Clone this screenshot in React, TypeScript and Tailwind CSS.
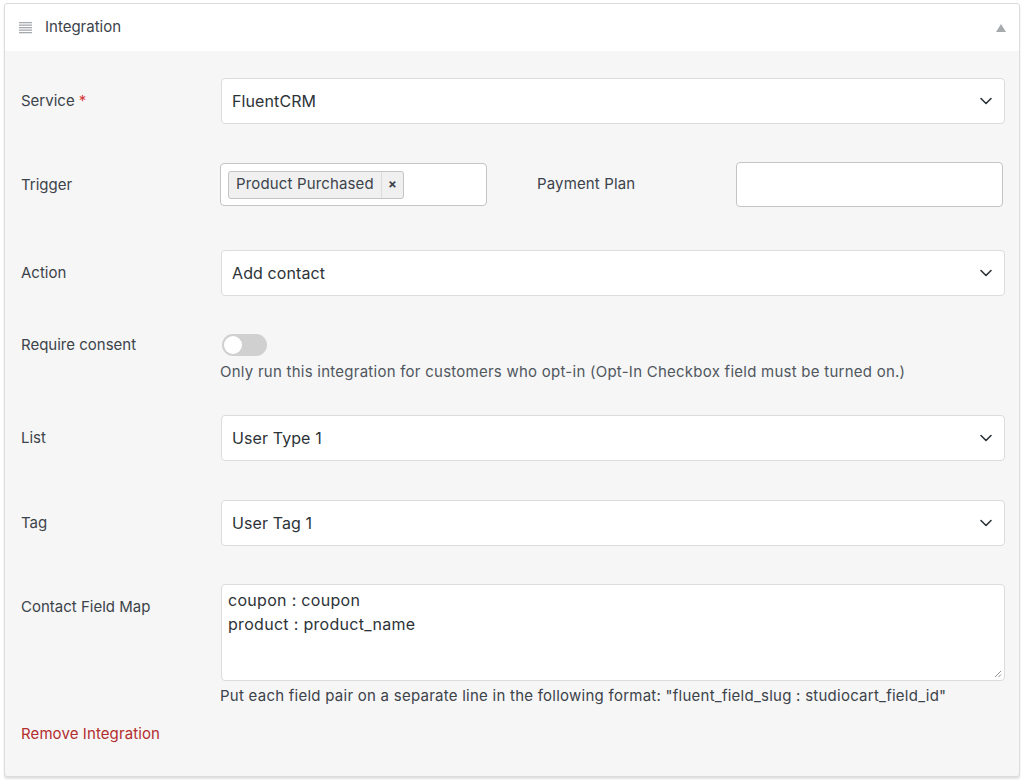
import React from "react";

const Chevron = () => (
  <svg width="14" height="14" viewBox="0 0 14 14" fill="none" className="shrink-0">
    <path d="M2 4.5 L7 9.5 L12 4.5" stroke="#2c3338" strokeWidth="1.6" strokeLinecap="round" strokeLinejoin="round" />
  </svg>
);

const Select = ({ value }: { value: string }) => (
  <div className="flex h-[46px] flex-1 items-center justify-between rounded-[4px] border border-[#dcdcde] bg-white pl-[10px] pr-[11px] text-[16px] tracking-[0.1px] text-[#2c3338]">
    <span>{value}</span>
    <Chevron />
  </div>
);

const Label = ({ children }: { children: React.ReactNode }) => (
  <div className="w-[200px] shrink-0 text-[15px] leading-[22px] text-[#3c434a]">{children}</div>
);

export default function App() {
  return (
    <div className="min-h-[780px] bg-white pt-[3px]" style={{ fontFamily: "Inter, 'Noto Sans', sans-serif" }}>
      <div className="ml-[4px] w-[1016px] rounded-[3px] border border-[#dcdcde] bg-[#f6f6f6] shadow-[0_2px_2px_rgba(0,0,0,0.12)]">
        <div className="flex h-[47px] items-center rounded-t-[3px] bg-white pl-[14px] pr-[13px]">
          <svg width="14" height="12" viewBox="0 0 14 12" className="mr-[12px]">
            {[0, 2.5, 5, 7.5, 10].map((y) => (
              <rect key={y} x="0" y={y} width="13" height="1.3" fill="#a7aaad" />
            ))}
          </svg>
          <span className="text-[15px] text-[#3c434a]">Integration</span>
          <div className="flex-1" />
          <svg width="10" height="8" viewBox="0 0 10 8">
            <path d="M5 0 L10 8 L0 8 Z" fill="#a7aaad" />
          </svg>
        </div>

        <div className="pb-[31px] pl-[16px] pr-[14px] pt-[27px]">
          {/* Service */}
          <div className="flex items-center">
            <Label>
              Service <span className="text-[#d63638]">*</span>
            </Label>
            <Select value="FluentCRM" />
          </div>

          {/* Trigger */}
          <div className="mt-[38px] flex h-[45px] items-center">
            <Label>Trigger</Label>
            <div className="-ml-px flex h-[43px] w-[267px] items-center rounded-[4px] border border-[#c3c4c7] bg-white pl-[7px]">
              <div className="flex h-[28px] items-stretch rounded-[3px] border border-[#c3c4c7] bg-[#f0f0f1] text-[15px] text-[#3c434a]">
                <span className="flex items-center border-r border-[#dcdcde] px-[7px] tracking-[0.15px]">Product Purchased</span>
                <span className="flex w-[21px] items-center justify-center text-[13px] font-bold text-[#3c434a]">×</span>
              </div>
            </div>
            <div className="w-[249px] pl-[50px] text-[15px] tracking-[0.15px] text-[#3c434a]">Payment Plan</div>
            <div className="h-[45px] w-[267px] rounded-[4px] border border-[#c3c4c7] bg-white" />
          </div>

          {/* Action */}
          <div className="mt-[43px] flex items-center">
            <Label>Action</Label>
            <Select value="Add contact" />
          </div>

          {/* Require consent */}
          <div className="mt-[38px] flex">
            <Label>Require consent</Label>
            <div className="flex flex-col">
              <div className="ml-[1px] flex h-[22px] w-[45px] items-center rounded-full bg-[#d0d0d0] px-[2px]">
                <div className="h-[18px] w-[18px] rounded-full bg-white" />
              </div>
              <div className="-ml-px mt-[5px] text-[15px] leading-[22px] tracking-[0.25px] text-[#50575e]">
                Only run this integration for customers who opt-in (Opt-In Checkbox field must be turned on.)
              </div>
            </div>
          </div>

          {/* List */}
          <div className="mt-[32px] flex items-center">
            <Label>List</Label>
            <Select value="User Type 1" />
          </div>

          {/* Tag */}
          <div className="mt-[39px] flex items-center">
            <Label>Tag</Label>
            <Select value="User Tag 1" />
          </div>

          {/* Contact Field Map */}
          <div className="mt-[38px] flex">
            <Label>
              <div className="pt-[12px]">Contact Field Map</div>
            </Label>
            <div className="flex flex-1 flex-col">
              <div className="relative h-[97px] rounded-[4px] border border-[#dcdcde] bg-white px-[6px] pt-[3px] text-[16px] leading-[24px] tracking-[0.3px] text-[#2c3338]">
                <div>coupon : coupon</div>
                <div>product : product_name</div>
                <svg width="8" height="8" viewBox="0 0 8 8" className="absolute bottom-[2px] right-[2px]">
                  <path d="M7 1 L1 7 M7 4.5 L4.5 7" stroke="#8c8f94" strokeWidth="1" />
                </svg>
              </div>
              <div className="-ml-px mt-[4px] text-[15px] leading-[22px] tracking-[0.25px] text-[#3c434a]">
                Put each field pair on a separate line in the following format: "fluent_field_slug : studiocart_field_id"
              </div>
            </div>
          </div>

          <div className="mt-[16px] text-[15px] leading-[22px] tracking-[0.1px] text-[#b32d2e]">Remove Integration</div>
        </div>
      </div>
    </div>
  );
}
